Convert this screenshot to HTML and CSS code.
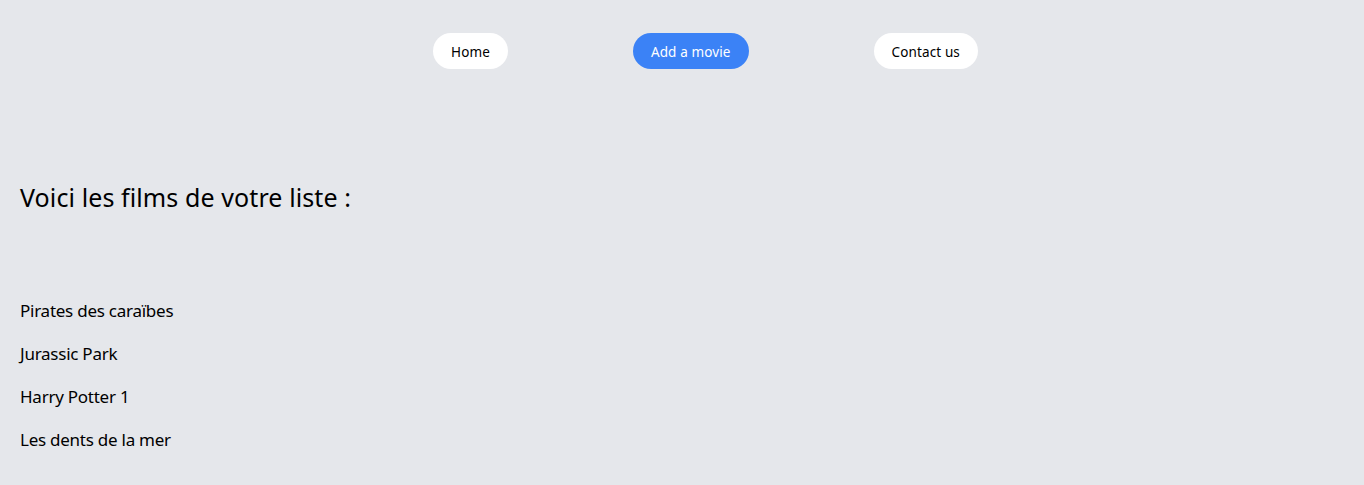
FILE: index.html
```html
<!DOCTYPE html>
<html lang="fr">
<head>
<meta charset="utf-8">
<title>Movies</title>
<link rel="stylesheet" href="styles.css">
</head>
<body>
<nav class="nav">
  <a class="nav-link" href="#">Home</a>
  <a class="nav-link active" href="#">Add a movie</a>
  <a class="nav-link" href="#">Contact us</a>
</nav>
<main class="content">
  <h1 class="title">Voici les films de votre liste :</h1>
  <ul class="movies">
    <li class="movie">Pirates des caraïbes</li>
    <li class="movie">Jurassic Park</li>
    <li class="movie">Harry Potter 1</li>
    <li class="movie">Les dents de la mer</li>
  </ul>
</main>
</body>
</html>
```
FILE: styles.css
```css
html, body {
  margin: 0;
  padding: 0;
}
body {
  background: #e5e7eb;
  font-family: "Noto Sans", "Open Sans", sans-serif;
  color: #000;
}
.nav {
  display: flex;
  justify-content: center;
  gap: 125px;
  padding: 33px 0 0 47px;
}
.nav-link {
  box-sizing: border-box;
  display: flex;
  align-items: center;
  height: 36px;
  padding: 2px 18px 0;
  border-radius: 18px;
  background: #fff;
  color: #000;
  font-size: 13.5px;
  letter-spacing: 0.12px;
  text-decoration: none;
}
.nav-link.active {
  background: #3b82f6;
  color: #fff;
}
.content {
  padding: 112px 20px 0;
}
.title {
  margin: 0;
  font-size: 25px;
  line-height: 32px;
  font-weight: 400;
  letter-spacing: 0.1px;
}
.movies {
  list-style: none;
  margin: 84px 0 0;
  padding: 0;
  display: flex;
  flex-direction: column;
  gap: 15px;
}
.movie {
  font-size: 17px;
  line-height: 28px;
  letter-spacing: -0.25px;
}
```
